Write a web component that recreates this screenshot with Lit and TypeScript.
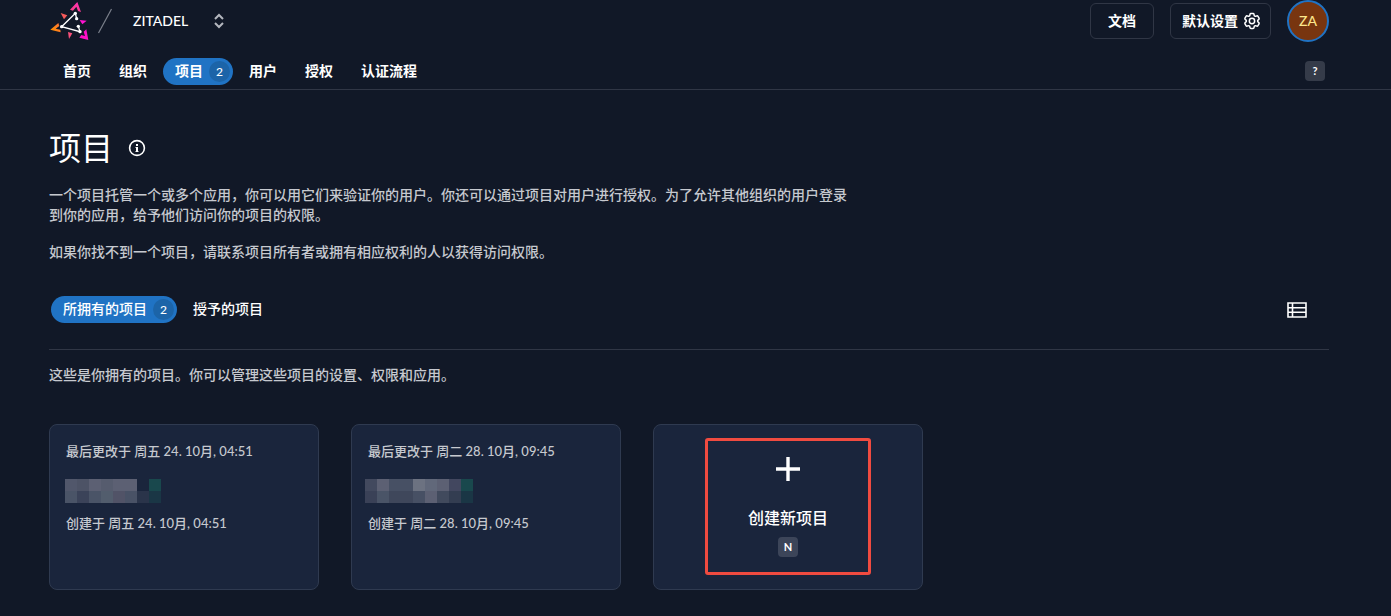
import { LitElement, html, svg, css } from "lit";
import { customElement, property } from "lit/decorators.js";

interface Tab {
  label: string;
  count?: number;
  active?: boolean;
}

interface Project {
  changed: string;
  created: string;
  inset: number;
  cells: string[][];
}

const NAV: Tab[] = [
  { label: "首页" },
  { label: "组织" },
  { label: "项目", count: 2, active: true },
  { label: "用户" },
  { label: "授权" },
  { label: "认证流程" },
];

const SCOPES: Tab[] = [
  { label: "所拥有的项目", count: 2, active: true },
  { label: "授予的项目" },
];

const PROJECTS: Project[] = [
  {
    changed: "最后更改于 周五 24. 10月, 04:51",
    created: "创建于 周五 24. 10月, 04:51",
    inset: 2,
    cells: [
      ["#51576b", "#4d5366", "#5c6073", "#565c6e", "#5c6073", "#5c6073", "", "#19484d"],
      ["#4a5467", "#3b4359", "#4a5467", "#525d6d", "#515367", "#495266", "#2a344a", "#1a3645"],
    ],
  },
  {
    changed: "最后更改于 周二 28. 10月, 09:45",
    created: "创建于 周二 28. 10月, 09:45",
    inset: 0,
    cells: [
      ["#42495e", "#5c6073", "#475064", "#475064", "#6c7281", "#61687a", "#5c6073", "#42475f", "#19484d"],
      ["#3a4157", "#4a5467", "#3f475b", "#3f475b", "#475064", "#5c6073", "#414a5d", "#333d51", "#1a3645"],
    ],
  },
];

@customElement("tab-pills")
export class TabPills extends LitElement {
  @property({ attribute: false }) tabs: Tab[] = [];
  @property({ type: Boolean, reflect: true }) strong = false;

  static styles = css`
    :host {
      display: block;
    }
    .tabs {
      display: flex;
      gap: 4px;
      padding-left: 2px;
    }
    .tab {
      display: flex;
      align-items: center;
      gap: 6px;
      height: 27px;
      padding: 0 12px;
      border-radius: 14px;
      color: #fff;
      font-size: 14px;
      line-height: 20px;
      font-weight: 500;
      text-decoration: none;
      white-space: nowrap;
    }
    :host([strong]) .tab {
      font-weight: 700;
    }
    .active {
      background: #2073c4;
      padding-right: 3px;
    }
    .label {
      padding-bottom: 2px;
    }
    .count {
      width: 21px;
      height: 21px;
      border-radius: 50%;
      background: #1c64a8;
      font-size: 12px;
      line-height: 21px;
      text-align: center;
      font-weight: 500;
    }
  `;

  render() {
    return html`<nav class="tabs">
      ${this.tabs.map(
        (t) => html`<a class="tab ${t.active ? "active" : ""}" href="#"
          ><span class="label">${t.label}</span>${t.count ? html`<span class="count">${t.count}</span>` : ""}</a
        >`,
      )}
    </nav>`;
  }
}

@customElement("project-card")
export class ProjectCard extends LitElement {
  @property({ attribute: false }) project!: Project;

  static styles = css`
    :host {
      display: block;
    }
    .card {
      box-sizing: border-box;
      height: 100%;
      padding: 16px 16px 16px 13px;
      border: 1px solid #2f3a50;
      border-radius: 8px;
      background: #1a253c;
      color: #c6c9cf;
      font-size: 13px;
      line-height: 20px;
    }
    .line {
      margin: 0;
      padding-left: 3px;
      font-weight: 500;
      white-space: nowrap;
    }
    .name {
      display: block;
      margin: 18px 0 10px;
    }
  `;

  render() {
    const p = this.project;
    return html`<article class="card">
      <p class="line">${p.changed}</p>
      <svg class="name" width="110" height="24" shape-rendering="crispEdges" aria-hidden="true">
        ${p.cells.map((row, y) =>
          row.map((c, x) =>
            c
              ? svg`<rect x=${p.inset + x * 12} y=${y * 12} width="12" height="12" fill=${c}></rect>`
              : "",
          ),
        )}
      </svg>
      <p class="line">${p.created}</p>
    </article>`;
  }
}

@customElement("app-root")
export class AppRoot extends LitElement {
  static styles = css`
    :host {
      display: block;
      min-height: 100vh;
      background: #111827;
      color: #fff;
      font-family: Lato, "Noto Sans CJK SC", sans-serif;
      font-size: 14px;
      line-height: 20px;
    }
    button {
      margin: 0;
      font: inherit;
      color: inherit;
      cursor: pointer;
    }
    .header {
      padding: 0 62px 4px 49px;
      border-bottom: 1px solid #303645;
    }
    .bar {
      display: flex;
      align-items: center;
      height: 42px;
    }
    .logo {
      display: block;
      margin-left: 1px;
    }
    .slash {
      margin: 0 20px 0 7px;
    }
    .org {
      display: flex;
      align-items: center;
      gap: 24px;
      padding: 0;
      border: 0;
      background: none;
      font-weight: 500;
    }
    .actions {
      display: flex;
      align-items: center;
      gap: 16px;
      margin-left: auto;
    }
    .action {
      display: flex;
      align-items: center;
      gap: 4px;
      height: 36px;
      padding: 0 17px;
      border: 1px solid #303645;
      border-radius: 6px;
      background: none;
      font-weight: 700;
    }
    .settings {
      padding: 0 8px 0 11px;
    }
    .avatar {
      width: 42px;
      height: 42px;
      padding: 0;
      border: 2px solid #2073c4;
      border-radius: 50%;
      background: #78350f;
      color: #fde68a;
      font-weight: 500;
    }
    .menu {
      display: flex;
      align-items: flex-start;
      justify-content: space-between;
      margin-top: 16px;
      padding-right: 4px;
    }
    .help {
      padding-top: 3px;
    }
    .key {
      display: block;
      box-sizing: border-box;
      width: 20px;
      height: 20px;
      padding: 0;
      border: 0;
      border-radius: 4px;
      background: #353b49;
      color: #fff;
      font: 700 11px/20px Lato, sans-serif;
      text-align: center;
    }
    .add .key {
      background: #3c4559;
    }
    .main {
      padding: 34px 62px 26px 49px;
    }
    .title {
      display: flex;
      align-items: center;
      gap: 15px;
    }
    h1 {
      margin: 0;
      font-size: 32px;
      line-height: 48px;
      font-weight: 400;
    }
    .info {
      display: flex;
      padding: 0;
      border: 0;
      background: none;
    }
    .text {
      max-width: 800px;
      margin: 0;
      color: #c6c9cf;
      font-weight: 500;
    }
    .lead {
      margin: 13px 0 17px;
    }
    .scopes {
      display: flex;
      align-items: center;
      justify-content: space-between;
      margin-top: 34px;
      padding: 0 22px 26px 0;
      border-bottom: 1px solid #303645;
    }
    .view {
      display: flex;
      padding: 0;
      border: 0;
      background: none;
    }
    .hint {
      margin-top: 15px;
    }
    .cards {
      display: grid;
      grid-template-columns: repeat(auto-fill, 270px);
      grid-auto-rows: 166px;
      gap: 32px;
      margin-top: 39px;
    }
    .add {
      position: relative;
      display: flex;
      flex-direction: column;
      align-items: center;
      justify-content: flex-start;
      padding: 32px 0 0;
      border: 1px solid #2f3a50;
      border-radius: 8px;
      background: #1a253c;
      font-size: 16px;
      line-height: 24px;
      font-weight: 500;
    }
    .add-label {
      margin: 25px 0 7px;
    }
    .mark {
      position: absolute;
      inset: 13px 51px 14px;
      border: 3px solid #f04b40;
      border-radius: 3px;
    }
  `;

  private logo() {
    return html`<svg class="logo" width="40" height="39" viewBox="15 6 120 117" role="img" aria-label="ZITADEL">
      <defs>
        <linearGradient id="top" x1="0" y1="1" x2="0.5" y2="0">
          <stop offset="0" stop-color="#f6457e"></stop>
          <stop offset="1" stop-color="#ff2fb0"></stop>
        </linearGradient>
        <linearGradient id="left" x1="0" y1="0.5" x2="1" y2="0">
          <stop offset="0" stop-color="#ff8f00"></stop>
          <stop offset="1" stop-color="#fe6f3f"></stop>
        </linearGradient>
      </defs>
      <path fill="url(#top)" d="M97 6L108 36L99 33L94 20L84 32L75 29Z"></path>
      <path fill="url(#left)" d="M16 89L40 69L43 78L32 86L46 89L47 97Z"></path>
      <path fill="#ff10c8" d="M130 120L103 113L109 105L120 108L116 95L124 88Z"></path>
      <path fill="#f75a5a" d="M47 39L67 46L57 58Z"></path>
      <path fill="#ff12d0" d="M104 60L125 62L112 73Z"></path>
      <path fill="#f9507a" d="M69 96L82 100L72 117Z"></path>
      <path fill="none" stroke="#fff" stroke-width="4" d="M95 56L91 40L50 80L105 95L100 79"></path>
      <g fill="#fff">
        <circle cx="91" cy="40" r="5"></circle>
        <circle cx="95" cy="56" r="5"></circle>
        <circle cx="100" cy="79" r="5"></circle>
        <circle cx="105" cy="95" r="5"></circle>
        <circle cx="50" cy="80" r="5"></circle>
      </g>
    </svg>`;
  }

  render() {
    return html`
      <header class="header">
        <div class="bar">
          ${this.logo()}
          <svg class="slash" width="16" height="26" viewBox="0 0 16 26" aria-hidden="true">
            <path d="M1.5 25L14.5 1" stroke="#7b808b" stroke-width="1.2"></path>
          </svg>
          <button class="org">
            ZITADEL
            <svg width="14" height="16" viewBox="0 0 14 16" fill="none" stroke="#b4b7be" stroke-width="2" aria-hidden="true">
              <path d="M3 6L7 2L11 6M3 10L7 14L11 10"></path>
            </svg>
          </button>
          <div class="actions">
            <button class="action">文档</button>
            <button class="action settings">
              默认设置
              <svg width="20" height="20" viewBox="0 0 24 24" fill="none" stroke="#fff" stroke-width="1.8" stroke-linejoin="round" stroke-linecap="round" aria-hidden="true">
                <path d="M9.594 3.94c.09-.542.56-.94 1.11-.94h2.593c.55 0 1.02.398 1.11.94l.213 1.281c.063.374.313.686.645.87.074.04.147.083.22.127.324.196.72.257 1.075.124l1.217-.456a1.125 1.125 0 011.37.49l1.296 2.247a1.125 1.125 0 01-.26 1.431l-1.003.827c-.293.24-.438.613-.431.992a6.759 6.759 0 010 .255c-.007.378.138.75.43.99l1.005.828c.424.35.534.954.26 1.43l-1.298 2.247a1.125 1.125 0 01-1.369.491l-1.217-.456c-.355-.133-.75-.072-1.076.124a6.57 6.57 0 01-.22.128c-.331.183-.581.495-.644.869l-.213 1.28c-.09.543-.56.941-1.11.941h-2.594c-.55 0-1.02-.398-1.11-.94l-.213-1.281c-.062-.374-.312-.686-.644-.87a6.52 6.52 0 01-.22-.127c-.325-.196-.72-.257-1.076-.124l-1.217.456a1.125 1.125 0 01-1.369-.49l-1.297-2.247a1.125 1.125 0 01.26-1.431l1.004-.827c.292-.24.437-.613.43-.992a6.932 6.932 0 010-.255c.007-.378-.138-.75-.43-.99l-1.004-.828a1.125 1.125 0 01-.26-1.43l1.297-2.247a1.125 1.125 0 011.37-.491l1.216.456c.356.133.751.072 1.076-.124.072-.044.146-.087.22-.128.332-.183.582-.495.644-.869l.214-1.281z"></path>
                <circle cx="12" cy="12" r="3.2"></circle>
              </svg>
            </button>
            <button class="avatar">ZA</button>
          </div>
        </div>
        <div class="menu">
          <tab-pills strong .tabs=${NAV}></tab-pills>
          <div class="help"><button class="key">?</button></div>
        </div>
      </header>
      <main class="main">
        <div class="title">
          <h1>项目</h1>
          <button class="info" aria-label="info">
            <svg width="18" height="18" viewBox="0 0 18 18" aria-hidden="true">
              <circle cx="9" cy="9" r="7.4" fill="none" stroke="#fff" stroke-width="1.6"></circle>
              <path fill="#fff" d="M8 5h2v2H8zM7.5 8H10v4h.5v1h-3v-1H8V9h-.5z"></path>
            </svg>
          </button>
        </div>
        <p class="text lead">一个项目托管一个或多个应用，你可以用它们来验证你的用户。你还可以通过项目对用户进行授权。为了允许其他组织的用户登录到你的应用，给予他们访问你的项目的权限。</p>
        <p class="text">如果你找不到一个项目，请联系项目所有者或拥有相应权利的人以获得访问权限。</p>
        <div class="scopes">
          <tab-pills .tabs=${SCOPES}></tab-pills>
          <button class="view" aria-label="table">
            <svg width="20" height="16" viewBox="0 0 20 16" fill="none" stroke="#fff" stroke-width="1.6" aria-hidden="true">
              <path d="M1 1H19V15H1ZM1 5.7H19M1 10.3H19M5.5 1V15"></path>
            </svg>
          </button>
        </div>
        <p class="text hint">这些是你拥有的项目。你可以管理这些项目的设置、权限和应用。</p>
        <section class="cards">
          ${PROJECTS.map((p) => html`<project-card .project=${p}></project-card>`)}
          <button class="add">
            <svg width="24" height="24" viewBox="0 0 24 24" aria-hidden="true">
              <path d="M12 0V24M0 12H24" stroke="#fff" stroke-width="3.4"></path>
            </svg>
            <span class="add-label">创建新项目</span>
            <span class="key">N</span>
            <span class="mark"></span>
          </button>
        </section>
      </main>
    `;
  }
}
